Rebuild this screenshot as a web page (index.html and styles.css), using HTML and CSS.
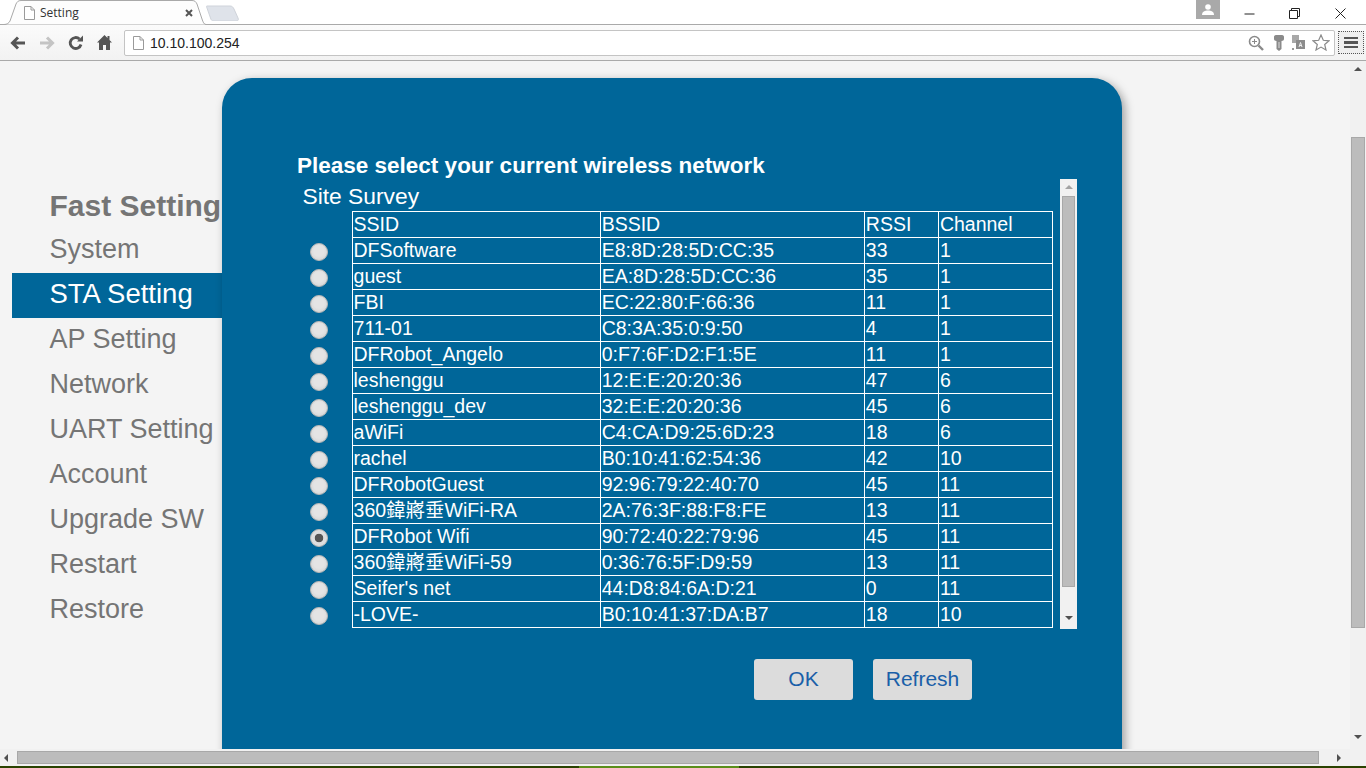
FILE: index.html
```html
<!DOCTYPE html>
<html lang="en">
<head>
<meta charset="utf-8">
<title>Setting</title>
<link rel="stylesheet" href="styles.css">
</head>
<body>
<div class="browser">
  <header class="tabstrip">
    <div class="tab">
      <svg class="tab-shape" width="206" height="25" viewBox="0 0 206 25"><path d="M0 24.500H4C7 24.500 9 23 10 21L16 4C17 2 18 .5 21 .5H192C195 .5 196 2 197 4L202 19C203 22 204 24.500 206 24.500" fill="#fdfdfd" stroke="#a9a9a9"/></svg>
      <svg class="doc" width="12" height="14" viewBox="0 0 12 14"><path d="M1.5.5H8L11.500 4V13.500H1.500Z" fill="#fff" stroke="#9a9a9a"/><path d="M8 .5V4H11.500" fill="none" stroke="#9a9a9a"/></svg>
      <span class="tab-title">Setting</span>
      <svg class="tab-close" width="8" height="8" viewBox="0 0 8 8"><path d="M1 1L7 7M7 1L1 7" stroke="#555" stroke-width="2"/></svg>
    </div>
    <svg class="newtab" width="34" height="16" viewBox="0 0 34 16"><path d="M1 1H24C26 1 27 2 28 4L32 13C33 15 32 16 30 16H8C6 16 5 15 4.500 13L1 3C.5 2 0 1 1 1Z" fill="#dfe3ea" stroke="#cfd3da"/></svg>
    <div class="strip-gap"></div>
    <div class="avatar"><svg width="12" height="11" viewBox="0 0 12 11"><circle cx="6" cy="3" r="2.800" fill="#fff"/><path d="M0 11C0 7.500 3 6.500 6 6.500S12 7.500 12 11Z" fill="#fff"/></svg></div>
    <div class="winbtn"><svg width="11" height="11" viewBox="0 0 11 11"><path d="M.5 6H10.500" stroke="#222"/></svg></div>
    <div class="winbtn"><svg width="11" height="11" viewBox="0 0 11 11"><path d="M.5 2.500H8.500V10.500H.5ZM2.500 2.500V.5H10.500V8.500H8.500" fill="none" stroke="#222"/></svg></div>
    <div class="winbtn"><svg width="11" height="11" viewBox="0 0 11 11"><path d="M.5 .5L10.500 10.500M10.500 .5L.5 10.500" stroke="#222"/></svg></div>
  </header>
  <nav class="toolbar">
    <svg class="nav-icon" width="16" height="14" viewBox="0 0 16 14"><path d="M15 7H3M8 1.500L2.500 7L8 12.500" fill="none" stroke="#555" stroke-width="3"/></svg>
    <svg class="nav-icon" width="16" height="14" viewBox="0 0 16 14"><path d="M1 7H13M8 1.500L13.500 7L8 12.500" fill="none" stroke="#c4c4c4" stroke-width="3"/></svg>
    <svg class="nav-icon" width="16" height="16" viewBox="0 0 16 16"><path d="M13 9.500A5.500 5.500 0 1 1 11.500 4" fill="none" stroke="#555" stroke-width="2.800"/><path d="M9 6.500H15V.5Z" fill="#555"/></svg>
    <svg class="nav-icon" width="15" height="15" viewBox="0 0 15 15"><path d="M7.500 0L10.500 3V1H12.500V5L15 7.500H13V15H9V10H6V15H2V7.500H0Z" fill="#555"/></svg>
    <div class="omnibox">
      <svg width="12" height="14" viewBox="0 0 12 14"><path d="M1.5.5H8L11.500 4V13.500H1.500Z" fill="#fff" stroke="#9a9a9a"/><path d="M8 .5V4H11.500" fill="none" stroke="#9a9a9a"/></svg>
      <span class="url">10.10.100.254</span>
      <div class="omni-actions">
        <svg class="oa-zoom" width="16" height="16" viewBox="0 0 16 16"><circle cx="6.500" cy="6.500" r="5" fill="#fff" stroke="#8a8a8a" stroke-width="1.600"/><path d="M10.500 10.500L15 15" stroke="#8a8a8a" stroke-width="2.400"/><path d="M4 6.500H9M6.500 4V9" stroke="#8a8a8a"/></svg>
        <svg width="10" height="16" viewBox="0 0 10 16"><path d="M2 0H8C9.500 0 10 1 10 2V4C10 5 9 6 7.500 6V14L5 16L2.500 14V6C1 6 0 5 0 4V2C0 1 .5 0 2 0Z" fill="#8a8a8a"/><path d="M5 7V13" stroke="#ddd"/></svg>
        <svg width="14" height="16" viewBox="0 0 14 16"><path d="M1 0H8V8H1Z" fill="#a8a8a8"/><path d="M5 5H14V14H5Z" fill="#8c8c8c"/><path d="M8 12L9.500 7.500L11 12M8.500 10.500H10.500" fill="none" stroke="#eee"/><path d="M1 13L3 15M1 15L3 13" stroke="#999"/></svg>
        <svg width="18" height="17" viewBox="0 0 18 17"><path d="M9 1L11.300 6.300L17 6.800L12.700 10.500L14 16L9 13.100L4 16L5.300 10.500L1 6.800L6.700 6.300Z" fill="#fff" stroke="#8a8a8a" stroke-width="1.200"/></svg>
      </div>
    </div>
    <div class="menu-btn"><span></span><span></span><span></span></div>
  </nav>
  <div class="viewport-row">
    <main class="page">
      <aside class="sidebar">
        <a class="side-item strong">Fast Setting</a>
        <a class="side-item">System</a>
        <a class="side-item active">STA Setting</a>
        <a class="side-item">AP Setting</a>
        <a class="side-item">Network</a>
        <a class="side-item">UART Setting</a>
        <a class="side-item">Account</a>
        <a class="side-item">Upgrade SW</a>
        <a class="side-item">Restart</a>
        <a class="side-item">Restore</a>
      </aside>
      <section class="panel">
        <h1 class="panel-title">Please select your current wireless network</h1>
        <div class="survey">
          <div class="survey-body">
            <div class="survey-title">Site Survey</div>
            <table class="net-table">
              <tr><td class="pick"></td><td class="c1">SSID</td><td class="c2">BSSID</td><td class="c3">RSSI</td><td class="c4">Channel</td></tr>
              <tr><td class="pick"><input type="radio" name="net"></td><td>DFSoftware</td><td>E8:8D:28:5D:CC:35</td><td>33</td><td>1</td></tr>
              <tr><td class="pick"><input type="radio" name="net"></td><td>guest</td><td>EA:8D:28:5D:CC:36</td><td>35</td><td>1</td></tr>
              <tr><td class="pick"><input type="radio" name="net"></td><td>FBI</td><td>EC:22:80:F:66:36</td><td>11</td><td>1</td></tr>
              <tr><td class="pick"><input type="radio" name="net"></td><td>711-01</td><td>C8:3A:35:0:9:50</td><td>4</td><td>1</td></tr>
              <tr><td class="pick"><input type="radio" name="net"></td><td>DFRobot_Angelo</td><td>0:F7:6F:D2:F1:5E</td><td>11</td><td>1</td></tr>
              <tr><td class="pick"><input type="radio" name="net"></td><td>leshenggu</td><td>12:E:E:20:20:36</td><td>47</td><td>6</td></tr>
              <tr><td class="pick"><input type="radio" name="net"></td><td>leshenggu_dev</td><td>32:E:E:20:20:36</td><td>45</td><td>6</td></tr>
              <tr><td class="pick"><input type="radio" name="net"></td><td>aWiFi</td><td>C4:CA:D9:25:6D:23</td><td>18</td><td>6</td></tr>
              <tr><td class="pick"><input type="radio" name="net"></td><td>rachel</td><td>B0:10:41:62:54:36</td><td>42</td><td>10</td></tr>
              <tr><td class="pick"><input type="radio" name="net"></td><td>DFRobotGuest</td><td>92:96:79:22:40:70</td><td>45</td><td>11</td></tr>
              <tr><td class="pick"><input type="radio" name="net"></td><td>360鍏嶈垂WiFi-RA</td><td>2A:76:3F:88:F8:FE</td><td>13</td><td>11</td></tr>
              <tr><td class="pick"><input type="radio" name="net" checked></td><td>DFRobot Wifi</td><td>90:72:40:22:79:96</td><td>45</td><td>11</td></tr>
              <tr><td class="pick"><input type="radio" name="net"></td><td>360鍏嶈垂WiFi-59</td><td>0:36:76:5F:D9:59</td><td>13</td><td>11</td></tr>
              <tr><td class="pick"><input type="radio" name="net"></td><td>Seifer's net</td><td>44:D8:84:6A:D:21</td><td>0</td><td>11</td></tr>
              <tr><td class="pick"><input type="radio" name="net"></td><td>-LOVE-</td><td>B0:10:41:37:DA:B7</td><td>18</td><td>10</td></tr>
            </table>
          </div>
          <div class="vbar inner">
            <div class="arrow up muted"></div>
            <div class="thumb"></div>
            <div class="arrow down"></div>
          </div>
        </div>
        <div class="actions">
          <button class="btn" type="button">OK</button>
          <button class="btn" type="button">Refresh</button>
        </div>
      </section>
    </main>
    <div class="vbar outer">
      <div class="arrow up"></div>
      <div class="thumb"></div>
      <div class="arrow down"></div>
    </div>
  </div>
  <div class="hbar">
    <div class="arrow left"></div>
    <div class="hthumb"></div>
    <div class="arrow right"></div>
  </div>
  <div class="taskline"></div>
</div>
</body>
</html>
```
FILE: styles.css
```css
* { box-sizing: border-box; }
html, body { margin: 0; height: 100%; overflow: hidden; }
body { font-family: "Liberation Sans", Arial, "Noto Sans CJK TC", sans-serif; background: #f3f3f3; }
.browser { width: 1366px; height: 768px; display: flex; flex-direction: column; overflow: hidden; }

.tabstrip { height: 25px; flex: none; display: flex; align-items: flex-start; padding-right: 3px; background: linear-gradient(#fff 24px, #a9a9a9 24px); }
.tab { position: relative; width: 206px; height: 25px; flex: none; display: flex; align-items: center; padding: 0 13px 0 23px; }
.tab-shape { position: absolute; left: 0; top: 0; }
.doc, .tab-title, .tab-close { position: relative; }
.tab-title { font: 12px "Segoe UI", "Open Sans", "Liberation Sans", sans-serif; color: #333; margin-left: 5px; flex: 1; }
.newtab { flex: none; margin: 5px 0 0 0; }
.strip-gap { flex: 1; }
.avatar { width: 24px; height: 19px; background: #a9a9a9; display: flex; align-items: center; justify-content: center; flex: none; margin-right: 7px; }
.winbtn { width: 45.500px; height: 24px; display: flex; align-items: center; justify-content: center; flex: none; padding-top: 3px; }

.toolbar { height: 36px; flex: none; display: flex; align-items: center; padding: 0 2px 0 10px; background: linear-gradient(#fbfbfb, #f2f2f2); border-bottom: 1px solid #a9a9a9; }
.nav-icon { flex: none; margin-right: 13px; }
.nav-icon:nth-child(4) { margin-right: 12px; }
.omnibox { height: 26px; width: 1211px; flex: none; display: flex; align-items: center; padding: 0 4px 0 7px; background: #fff; border: 1px solid #c4c4c4; border-radius: 2px; }
.url { font-size: 14px; color: #222; margin-left: 6px; flex: 1; }
.omni-actions { display: flex; align-items: center; gap: 7px; }
.oa-zoom { margin-right: 3px; }
.menu-btn { width: 26px; height: 23px; margin-left: 3px; flex: none; display: flex; flex-direction: column; justify-content: center; gap: 2px; padding: 0 5px; border: 1px dotted #555; background: #efefef; }
.menu-btn span { height: 2.500px; background: #555; }

.viewport-row { height: 688px; flex: none; display: flex; }
.page { width: 1350px; flex: none; display: flex; align-items: flex-start; padding: 17px 0 0 12px; overflow: hidden; background: #f4f4f4; }
.sidebar { width: 210px; flex: none; margin-top: 105px; display: flex; flex-direction: column; }
.side-item { display: block; height: 45px; line-height: 42px; padding-left: 38px; font-size: 27px; color: #757575; white-space: nowrap; text-indent: -.5px; }
.side-item.strong { font-weight: bold; font-size: 30px; line-height: 45px; }
.side-item.active { background: #006699; color: #fff; font-size: 27.500px; }

.panel { width: 900px; height: 760px; flex: none; padding: 74px 45px 0 75px; background: #006699; border-radius: 30px; box-shadow: 3px 3px 10px rgba(0, 0, 0, .35); color: #fff; }
.panel-title { margin: 0; height: 27px; line-height: 27px; font-size: 22.500px; font-weight: bold; white-space: nowrap; }
.survey { width: 780px; height: 450px; display: flex; }
.survey-body { width: 763px; height: 449px; flex: none; overflow: hidden; padding-left: 6px; }
.survey-title { height: 32px; line-height: 34px; font-size: 22.800px; text-indent: -.5px; }

.net-table { border-collapse: collapse; table-layout: fixed; width: 750px; font-size: 19.500px; }
.net-table td { height: 26px; padding: 0 0 1px 1px; border: 1px solid #fff; line-height: 24px; white-space: nowrap; overflow: hidden; vertical-align: middle; }
.net-table td.pick { width: 49px; border: 0; border-right: 1px solid #fff; padding: 0; }
.net-table .c1 { width: 248px; }
.net-table .c2 { width: 264px; }
.net-table .c3 { width: 74px; }
.net-table .c4 { width: 114px; }
input[type=radio] { appearance: none; display: block; width: 18px; height: 18px; margin: 3px 0 0 7px; border-radius: 50%; border: 1px solid #b5b5b5; background: radial-gradient(circle at 50% 45%, #e4e4e4 0 5px, #d8d8d8 9px); }
input[type=radio]:checked { background: radial-gradient(circle, #555 0 4px, #dedede 4.600px); }

.vbar { flex: none; display: flex; flex-direction: column; align-items: center; background: #f1f1f1; }
.vbar.inner { width: 17px; height: 450px; }
.vbar.outer { width: 16px; }
.vbar .thumb { width: 13px; border: 1px solid #a8a8a8; background: #bcbcbc; }
.inner .thumb { height: 391px; }
.outer .thumb { width: 14px; height: 491px; margin-top: 59px; }
.arrow { flex: none; width: 0; height: 0; border-style: solid; border-color: transparent; }
.arrow.up { border-width: 0 4px 4px; border-bottom-color: #505050; margin: 6px 0 7px; }
.arrow.up.muted { border-bottom-color: #a3a3a3; }
.arrow.down { border-width: 4px 4px 0; border-top-color: #505050; margin-top: 29px; }
.outer .arrow.down { margin-top: 107px; }

.actions { display: flex; gap: 20px; padding-left: 457px; margin-top: 30px; }
.btn { width: 99px; height: 41px; padding: 0 0 2px; border: 0; border-radius: 3px; background: #dcdcdc; color: #1a5fa8; font: 21px "Liberation Sans", Arial, sans-serif; }

.hbar { height: 17px; flex: none; display: flex; align-items: center; background: #f1f1f1; }
.hthumb { width: 1302px; height: 13px; border: 1px solid #a8a8a8; background: #bcbcbc; }
.arrow.left { border-width: 4px 4px 4px 0; border-right-color: #505050; margin: 0 9px 0 4px; }
.arrow.right { border-width: 4px 0 4px 4px; border-left-color: #505050; margin-left: 18px; }
.taskline { flex: 1; background: linear-gradient(90deg, #2a4200 579px, #5b8e1a 579px, #5b8e1a 739px, #2a4200 739px); }
```
